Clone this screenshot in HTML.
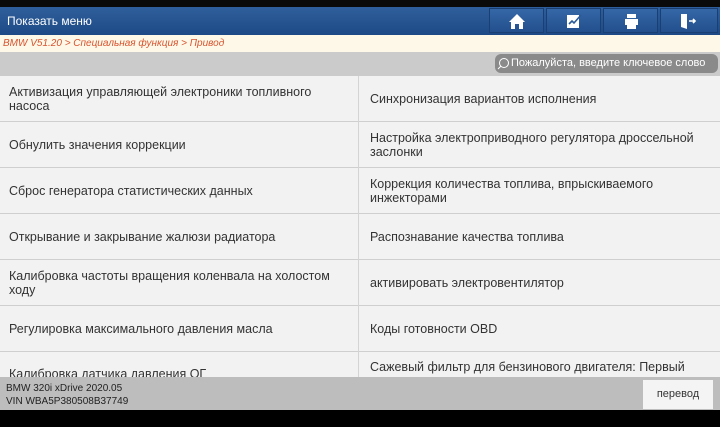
<!DOCTYPE html>
<html><head><meta charset="utf-8"><style>
*{margin:0;padding:0;box-sizing:border-box}
body{width:720px;height:427px;overflow:hidden;background:#000;font-family:"Liberation Sans",sans-serif;position:relative}
.top{position:absolute;left:0;top:0;width:720px;height:7px;background:#0a0a0a}
.hdr{position:absolute;left:0;top:7px;width:720px;height:28px;background:linear-gradient(#2f5f9c,#1d4a86);color:#fff;font-size:12px;line-height:28px;padding-left:7px}
.btn{position:absolute;top:8px;width:55px;height:25px;background:linear-gradient(#3567a6,#234f8d);border:1px solid #1a3f73}
.bc{position:absolute;left:0;top:35px;width:720px;height:17px;background:#fdf8e8;color:#d9542f;font-size:10px;font-style:italic;line-height:17px;padding-left:3px}
.sb{position:absolute;left:0;top:52px;width:720px;height:24px;background:#cbcbcb}
.search{position:absolute;right:2px;top:54px;width:223px;height:19px;background:#8a8a8a;border-radius:6px;color:#fff;font-size:11px;line-height:19px;padding-left:16px}
.list{position:absolute;left:0;top:76px;width:720px;height:301px;background:#f2f2f2;overflow:hidden}
.row{position:absolute;left:0;width:720px;height:46px;border-bottom:1px solid #cfcfcf}
.c{position:absolute;top:0;height:45px;display:flex;align-items:center;font-size:12.5px;color:#333;line-height:14px}
.l{left:9px;width:330px}.r{left:370px;width:345px}
.div{position:absolute;left:358px;top:76px;width:1px;height:301px;background:#d4d4d4}
.foot{position:absolute;left:0;top:377px;width:720px;height:33px;background:#bdbdbd;font-size:10px;color:#222;padding:5px 6px;line-height:13px}
.tr{position:absolute;left:643px;top:380px;width:70px;height:29px;background:#f4f4f4;color:#333;font-size:11px;line-height:29px;text-align:center}
</style></head><body>
<div class="top"></div>
<div class="hdr">Показать меню</div>
<div class="btn" style="left:489px"><svg width="55" height="25"><path d="M27 5 L19 13 H21 V20 H25 V15 H29 V20 H33 V13 H35Z" fill="#fff"/></svg></div>
<div class="btn" style="left:546px"><svg width="55" height="25"><rect x="20" y="6" width="12" height="13" fill="#fff"/><path d="M22 15 L25 12 L27 14 L34 6" stroke="#2a5a98" stroke-width="1.6" fill="none"/></svg></div>
<div class="btn" style="left:603px"><svg width="55" height="25"><rect x="23" y="5" width="9" height="4" fill="#fff"/><rect x="21" y="10" width="13" height="6" fill="#fff"/><rect x="23" y="15" width="9" height="5" fill="#fff"/></svg></div>
<div class="btn" style="left:660px;width:58px"><svg width="58" height="25"><path d="M20 5 H26 V20 L20 18Z" fill="#fff"/><path d="M28 12 H34 M32 10 L34 12 L32 14" stroke="#fff" stroke-width="1.6" fill="none"/></svg></div>
<div class="bc">BMW V51.20 &gt; Специальная функция &gt; Привод</div>
<div class="sb"></div>
<div class="search"><svg style="position:absolute;left:2px;top:3px" width="13" height="13"><circle cx="7" cy="6" r="4.5" stroke="#fff" fill="none"/><path d="M4 9 L1 12" stroke="#fff"/></svg>Пожалуйста, введите ключевое слово</div>
<div class="list">
<div class="row" style="top:0"><div class="c l">Активизация управляющей электроники топливного насоса</div><div class="c r">Синхронизация вариантов исполнения</div></div>
<div class="row" style="top:46px"><div class="c l">Обнулить значения коррекции</div><div class="c r">Настройка электроприводного регулятора дроссельной заслонки</div></div>
<div class="row" style="top:92px"><div class="c l">Сброс генератора статистических данных</div><div class="c r">Коррекция количества топлива, впрыскиваемого инжекторами</div></div>
<div class="row" style="top:138px"><div class="c l">Открывание и закрывание жалюзи радиатора</div><div class="c r">Распознавание качества топлива</div></div>
<div class="row" style="top:184px"><div class="c l">Калибровка частоты вращения коленвала на холостом ходу</div><div class="c r">активировать электровентилятор</div></div>
<div class="row" style="top:230px"><div class="c l">Регулировка максимального давления масла</div><div class="c r">Коды готовности OBD</div></div>
<div class="row" style="top:276px"><div class="c l" style="top:-1px">Калибровка датчика давления ОГ</div><div class="c r" style="top:-8px">Сажевый фильтр для бензинового двигателя: Первый</div></div>
</div>
<div class="div"></div>
<div class="foot">BMW 320i xDrive 2020.05<br>VIN WBA5P380508B37749</div>
<div class="tr">перевод</div>
</body></html>
